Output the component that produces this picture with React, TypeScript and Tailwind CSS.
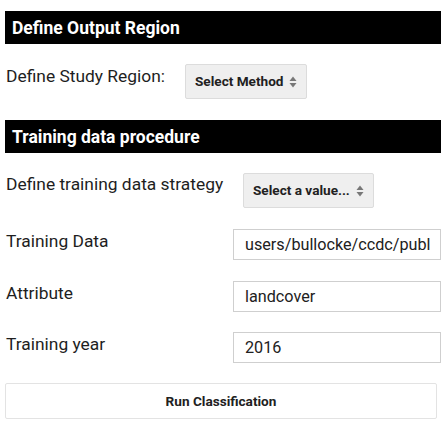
import React from "react";

function Arrows() {
  return (
    <svg width="8" height="12" viewBox="0 0 8 12" className="shrink-0">
      <path d="M4 0.5 L7.5 5 L0.5 5 Z" fill="#777777" />
      <path d="M0.5 7 L7.5 7 L4 11.5 Z" fill="#777777" />
    </svg>
  );
}

function Select({ text, width }: { text: string; width: string }) {
  return (
    <div
      className={`${width} h-[35px] shrink-0 flex items-center justify-between pl-[9px] pr-[9px] bg-[#efefef] border border-[#dcdcdc] rounded-[2px] text-[13.6px] font-bold text-[#212121]`}
    >
      <span>{text}</span>
      <Arrows />
    </div>
  );
}

function Header({ title, className }: { title: string; className: string }) {
  return (
    <div
      className={`${className} ml-[5px] w-[436px] h-[33px] bg-black text-white font-bold text-[17.5px] pl-[7px] flex items-center pt-[1px]`}
    >
      {title}
    </div>
  );
}

function InputRow({ label, value, className }: { label: string; value: string; className: string }) {
  return (
    <div className={`${className} flex items-start`}>
      <div className="ml-[6px] w-[227px] mt-[2px] text-[17.4px] text-[#1e1e1e] leading-[20px]">{label}</div>
      <input
        readOnly
        value={value}
        className="w-[208px] h-[31px] border border-[#cfcfcf] bg-white pl-[11px] pr-[2px] text-[16.2px] text-[#212121] outline-none font-['Roboto']"
      />
    </div>
  );
}

export default function App() {
  return (
    <div className="w-[448px] h-[422px] bg-white font-['Roboto',sans-serif] flex flex-col overflow-hidden">
      <Header title="Define Output Region" className="mt-[11px]" />
      <div className="mt-[20px] flex items-start">
        <div className="ml-[6px] w-[179px] mt-[2px] text-[17.4px] text-[#1e1e1e] leading-[20px]">Define Study Region:</div>
        <Select text="Select Method" width="w-[122px]" />
      </div>
      <Header title="Training data procedure" className="mt-[21px]" />
      <div className="mt-[20px] flex items-start">
        <div className="ml-[6px] w-[237px] mt-[1px] text-[17.4px] text-[#1e1e1e] leading-[20px]">Define training data strategy</div>
        <Select text="Select a value..." width="w-[131px]" />
      </div>
      <InputRow label="Training Data" value="users/bullocke/ccdc/publ" className="mt-[21px]" />
      <InputRow label="Attribute" value="landcover" className="mt-[21px]" />
      <InputRow label="Training year" value="2016" className="mt-[20px]" />
      <button className="mt-[20px] ml-[5px] w-[432px] h-[36px] shrink-0 border border-[#e3e3e3] rounded-[2px] bg-white text-[13.6px] font-bold text-[#212121] flex items-center justify-center">
        Run Classification
      </button>
    </div>
  );
}
